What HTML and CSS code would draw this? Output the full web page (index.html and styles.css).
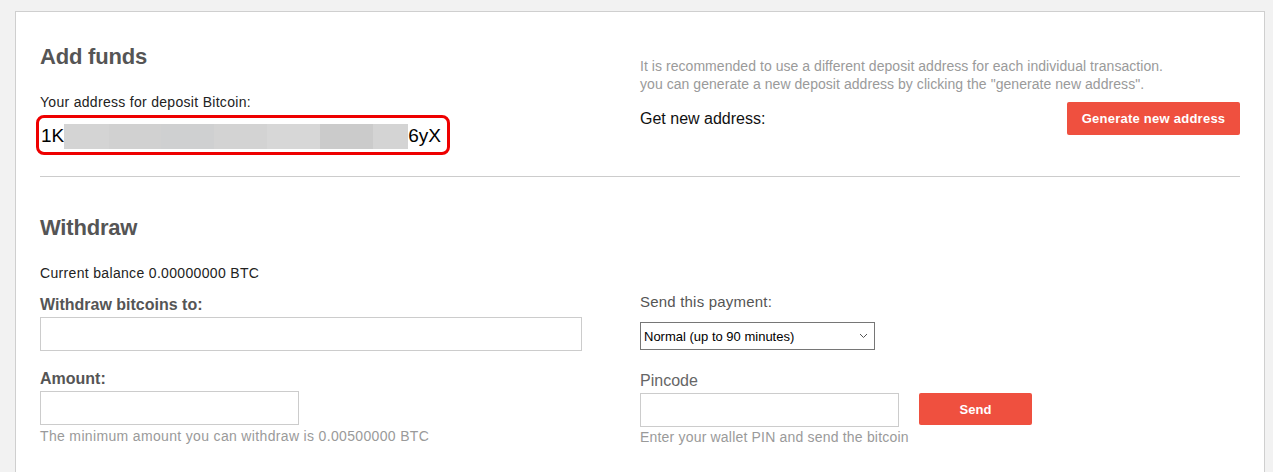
FILE: index.html
```html
<!DOCTYPE html>
<html lang="en">
<head>
<meta charset="utf-8">
<title>Add funds</title>
<link rel="stylesheet" href="styles.css">
</head>
<body>
<div class="card">
  <section class="funds">
    <div class="col">
      <h2 class="title">Add funds</h2>
      <div class="label-plain">Your address for deposit Bitcoin:</div>
      <div class="address">
        <span class="addr-text">1K</span>
        <span class="addr-blur"></span>
        <span class="addr-text">6yX</span>
      </div>
    </div>
    <div class="col col-right">
      <p class="note">It is recommended to use a different deposit address for each individual transaction.<br>you can generate a new deposit address by clicking the "generate new address".</p>
      <div class="newaddr">
        <span class="newaddr-label">Get new address:</span>
        <button class="btn btn-generate" type="button">Generate new address</button>
      </div>
    </div>
  </section>

  <hr class="sep">

  <section class="withdraw">
    <h2 class="title title-withdraw">Withdraw</h2>
    <div class="balance">Current balance 0.00000000 BTC</div>
    <div class="wgrid">
      <div class="col">
        <label class="label-bold first">Withdraw bitcoins to:</label>
        <input class="field field-wide" type="text">
        <label class="label-bold second">Amount:</label>
        <input class="field field-short" type="text">
        <div class="hint">The minimum amount you can withdraw is 0.00500000 BTC</div>
      </div>
      <div class="col col-right">
        <div class="label-pay">Send this payment:</div>
        <div class="select">
          <span class="select-text">Normal (up to 90 minutes)</span>
          <svg class="chev" width="9" height="6" viewBox="0 0 9 6"><path d="M1 1 L4.5 4.5 L8 1" fill="none" stroke="#555" stroke-width="1"/></svg>
        </div>
        <div class="label-pin">Pincode</div>
        <div class="pinrow">
          <input class="field field-pin" type="password">
          <button class="btn btn-send" type="button">Send</button>
        </div>
        <div class="hint hint-pin">Enter your wallet PIN and send the bitcoin</div>
      </div>
    </div>
  </section>
</div>
</body>
</html>
```

FILE: styles.css
```css
html, body {
  margin: 0;
  padding: 0;
}
body {
  background: #f2f2f2;
  font-family: "Liberation Sans", Arial, sans-serif;
  color: #222;
  padding: 11px 0 0 15px;
  width: 1250px;
}
.card {
  background: #fff;
  border: 1px solid #cfcfcf;
  border-bottom: none;
  padding: 32px 24px 60px 24px;
  min-height: 500px;
}
.funds {
  display: grid;
  grid-template-columns: 600px 600px;
}
.col {
  display: flex;
  flex-direction: column;
  align-items: flex-start;
}
.title {
  margin: 0;
  font-size: 22px;
  line-height: 26px;
  font-weight: bold;
  color: #555;
  letter-spacing: -0.2px;
}
.label-plain {
  margin-top: 23px;
  font-size: 14px;
  line-height: 18px;
  letter-spacing: 0.3px;
  color: #222;
}
.address {
  margin-top: 4px;
  margin-left: -4px;
  width: 406px;
  height: 34px;
  border: 3px solid #ee0000;
  border-radius: 8px;
  display: flex;
  align-items: center;
  padding-left: 2px;
}
.addr-text {
  font-size: 19px;
  line-height: 32px;
  padding-top: 2px;
  color: #000;
}
.addr-blur {
  width: 344px;
  height: 25px;
  margin-top: 2px;
  background: linear-gradient(to right,
    #d4d4d4 0, #d4d4d4 45px,
    #d1d1d1 45px, #d1d1d1 97px,
    #cfd0d1 97px, #cfd0d1 150px,
    #d3d3d3 150px, #d3d3d3 203px,
    #d7d7d7 203px, #d7d7d7 256px,
    #cbcbcb 256px, #cbcbcb 309px,
    #d4d4d4 309px, #d4d4d4 344px);
}
.col-right {
  align-items: stretch;
}
.note {
  margin: 13px 0 0 0;
  font-size: 14px;
  line-height: 18px;
  letter-spacing: 0.05px;
  color: #9a9a9a;
}
.newaddr {
  margin-top: 9px;
  display: flex;
  align-items: center;
  justify-content: space-between;
}
.newaddr-label {
  font-size: 16px;
  color: #111;
}
.btn {
  background: #ef503f;
  color: #fff;
  border: none;
  border-radius: 2px;
  font-family: "Liberation Sans", Arial, sans-serif;
  font-weight: bold;
  font-size: 13px;
  padding: 0;
  cursor: pointer;
}
.btn-generate {
  width: 173px;
  height: 33px;
  letter-spacing: 0.25px;
}
.sep {
  margin: 21px 0 0 0;
  border: none;
  border-top: 1px solid #cccccc;
  height: 0;
}
.title-withdraw {
  margin-top: 38px;
}
.balance {
  margin-top: 23px;
  font-size: 14px;
  line-height: 18px;
  letter-spacing: 0.33px;
  color: #222;
}
.wgrid {
  margin-top: 10px;
  display: grid;
  grid-template-columns: 600px 600px;
}
.label-bold {
  font-size: 16px;
  line-height: 20px;
  font-weight: bold;
  color: #555;
}
.label-bold.first {
  margin-top: 3px;
}
.label-bold.second {
  margin-top: 18px;
}
.field {
  box-sizing: border-box;
  height: 34px;
  border: 1px solid #cccccc;
  background: #fff;
  margin: 2px 0 0 0;
  padding: 0 8px;
  font-size: 14px;
  outline: none;
}
.field-wide {
  width: 542px;
}
.field-short {
  width: 259px;
}
.hint {
  margin-top: 2px;
  font-size: 14px;
  line-height: 18px;
  letter-spacing: 0.34px;
  color: #9a9a9a;
}
.label-pay {
  font-size: 15px;
  line-height: 19px;
  letter-spacing: 0.2px;
  color: #555;
}
.select {
  box-sizing: border-box;
  margin-top: 11px;
  width: 235px;
  height: 28px;
  border: 1px solid #767676;
  display: flex;
  align-items: center;
  justify-content: space-between;
  padding: 0 6px 0 3px;
  background: #fff;
}
.select-text {
  font-size: 13px;
  color: #000;
}
.chev {
  display: block;
}
.label-pin {
  margin-top: 21px;
  font-size: 16px;
  line-height: 20px;
  color: #666;
}
.pinrow {
  margin-top: 2px;
  display: flex;
  align-items: flex-start;
  gap: 20px;
}
.pinrow .field {
  margin: 0;
}
.field-pin {
  width: 259px;
}
.btn-send {
  width: 113px;
  height: 32px;
  font-size: 13px;
}
.hint-pin {
  margin-top: 1px;
  letter-spacing: 0.19px;
}
```
